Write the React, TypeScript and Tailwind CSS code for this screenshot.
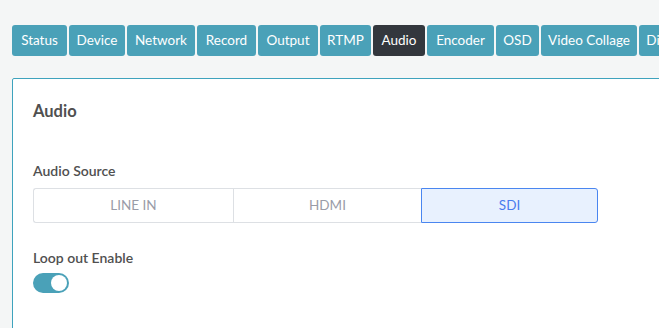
const tabs = [
  { name: "Status", w: 55 },
  { name: "Device", w: 56 },
  { name: "Network", w: 68 },
  { name: "Record", w: 59 },
  { name: "Output", w: 60 },
  { name: "RTMP", w: 51 },
  { name: "Audio", w: 52 },
  { name: "Encoder", w: 67 },
  { name: "OSD", w: 43 },
  { name: "Video Collage", w: 96 },
  { name: "Diagnose", w: 70 },
];

const sources = [
  { name: "LINE IN", w: 200 },
  { name: "HDMI", w: 188 },
  { name: "SDI", w: 177 },
];

export default function App() {
  const active = "Audio";
  const source = "SDI";
  return (
    <div
      className="w-[659px] h-[328px] overflow-hidden bg-[#f4f6f6] pl-3 pt-[25px]"
      style={{ fontFamily: "Lato, 'Open Sans', sans-serif" }}
    >
      <div className="flex gap-[2px] whitespace-nowrap">
        {tabs.map((t) => (
          <div
            key={t.name}
            style={{ width: t.w }}
            className={`shrink-0 h-[31px] flex items-center justify-center rounded-[3px] text-[13.5px] text-white ${
              t.name === active ? "bg-[#33373d]" : "bg-[#4aa1b8]"
            }`}
          >
            {t.name}
          </div>
        ))}
      </div>

      <div className="mt-[22px] w-[700px] h-[300px] bg-white border border-[#3ea3bd] rounded-tl-[2px] pl-[20px] pt-[21px]">
        <h2 className="text-[16.5px] font-bold text-[#505050] leading-[22px]">Audio</h2>

        <div className="mt-[40px] text-[14px] font-semibold text-[#505050] leading-[18px]">
          Audio Source
        </div>
        <div className="mt-[8px] flex h-[35px] w-[565px]">
          {sources.map((s, i) => {
            const on = s.name === source;
            return (
              <div
                key={s.name}
                style={{ width: s.w }}
                className={`flex items-center justify-center text-[13.5px] ${
                  on
                    ? "bg-[#e8f1fe] border border-[#4a86f0] text-[#4a7cee] rounded-r-[3px]"
                    : `border-y border-[#dde0e4] text-[#9a9ca8] ${i === 0 ? "border-l rounded-l-[3px]" : "border-l"}`
                }`}
              >
                {s.name}
              </div>
            );
          })}
        </div>

        <div className="mt-[26px] text-[14px] font-semibold text-[#505050] leading-[18px]">
          Loop out Enable
        </div>
        <div className="mt-[6px] w-[36px] h-[20px] rounded-full bg-[#4aa1b8] flex items-center justify-end pr-[2px]">
          <div className="w-[16px] h-[16px] rounded-full bg-white" />
        </div>
      </div>
    </div>
  );
}
